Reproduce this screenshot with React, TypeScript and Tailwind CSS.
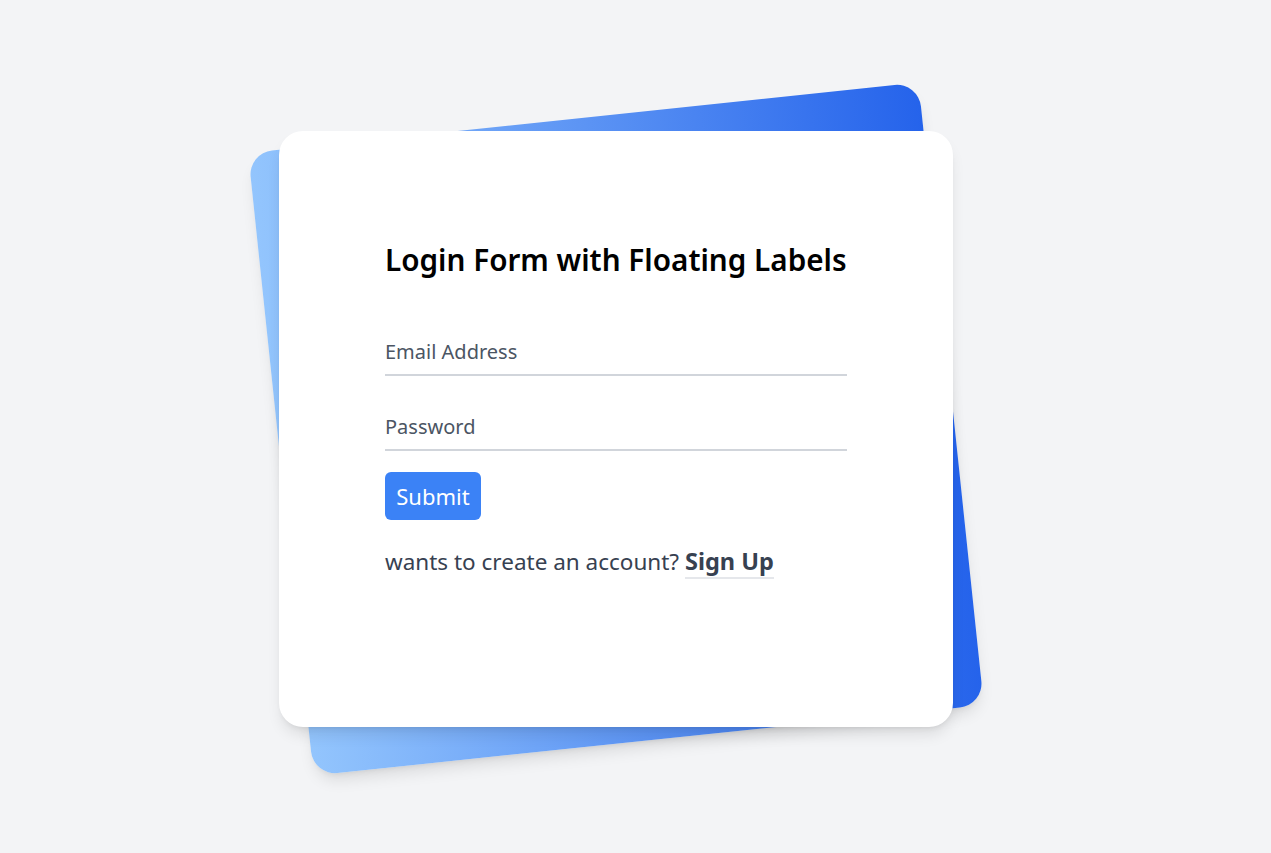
export default function App() {
  return (
    <div className="min-h-screen bg-[#f3f4f6] flex items-start justify-center pt-[116px] pr-[39px] font-['Noto_Sans',sans-serif]">
      <div className="relative w-[674px] py-[15px]">
        <div className="absolute inset-0 rounded-3xl bg-linear-to-r/srgb from-[#93c5fd] to-[#2563eb] shadow-lg -rotate-6" />
        <div className="relative h-[596px] rounded-3xl bg-white shadow-lg px-[106px] pt-[111px]">
          <h1 className="whitespace-nowrap text-[29.7px] leading-9 font-semibold text-black">
            Login Form with Floating Labels
          </h1>
          <form className="mt-[58px] flex flex-col" onSubmit={(e) => e.preventDefault()}>
            <div className="relative">
              <input
                id="email"
                type="text"
                placeholder="Email Address"
                className="h-10 w-full border-b-2 border-[#d1d5db] pb-2 text-xl text-[#111827] placeholder:text-[#4b5563] outline-none"
              />
            </div>
            <div className="relative mt-[35px]">
              <input
                id="password"
                type="password"
                placeholder="Password"
                className="h-10 w-full border-b-2 border-[#d1d5db] pb-2 text-xl text-[#111827] placeholder:text-[#4b5563] outline-none"
              />
            </div>
            <div className="mt-[21px]">
              <button className="h-12 w-[96px] rounded-md bg-[#3b82f6] text-[22px] text-white">Submit</button>
            </div>
            <p className="mt-[24px] text-[22.5px] text-[#374151]">
              wants to create an account?{" "}
              <a href="#" className="text-[23.5px] font-bold border-b-2 border-[#e5e7eb]">Sign Up</a>
            </p>
          </form>
        </div>
      </div>
    </div>
  );
}
